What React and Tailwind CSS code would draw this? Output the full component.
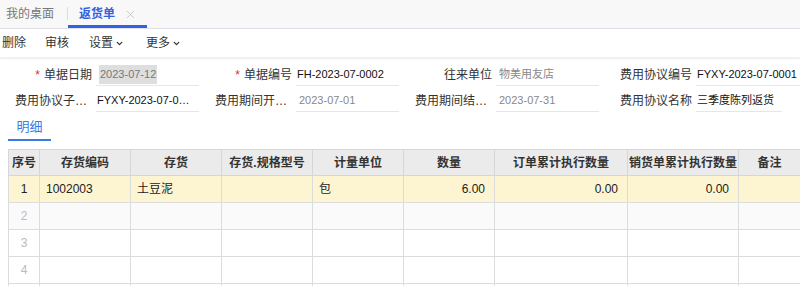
import { ChevronDown, X } from "lucide-react";

const font = { fontFamily: '"Liberation Sans", "Noto Sans CJK SC", sans-serif' };

const fields = [
  [
    { label: "单据日期", value: "2023-07-12", required: true, muted: true, selected: true },
    { label: "单据编号", value: "FH-2023-07-0002", required: true },
    { label: "往来单位", value: "物美用友店", muted: true },
    { label: "费用协议编号", value: "FYXY-2023-07-0001", wide: true },
  ],
  [
    { label: "费用协议子期间", value: "FYXY-2023-07-0001", clip: true },
    { label: "费用期间开始日期", value: "2023-07-01", muted: true },
    { label: "费用期间结束日期", value: "2023-07-31", muted: true },
    { label: "费用协议名称", value: "三季度陈列返货", short: true },
  ],
];

const columns = [
  { title: "序号", width: 31 },
  { title: "存货编码", width: 91 },
  { title: "存货", width: 91 },
  { title: "存货.规格型号", width: 91 },
  { title: "计量单位", width: 91 },
  { title: "数量", width: 91 },
  { title: "订单累计执行数量", width: 133 },
  { title: "销货单累计执行数量", width: 111 },
  { title: "备注", width: 62 },
];

const rows = [
  ["1", "1002003", "土豆泥", "", "包", "6.00", "0.00", "0.00", ""],
  ["2", "", "", "", "", "", "", "", ""],
  ["3", "", "", "", "", "", "", "", ""],
  ["4", "", "", "", "", "", "", "", ""],
];

function Field({ f }) {
  return (
    <div className="flex h-[26px] w-[200px] items-center">
      <div className="ml-[15px] w-[77px] truncate text-right text-[12px] text-[#333]">
        {f.required && <span className="mr-1 text-[#e23]">*</span>}
        {f.label}
      </div>
      <div
        className={`ml-[4px] flex h-[22px] items-center border-b border-[#e6e6e6] ${
          f.short ? "w-[86px]" : f.wide ? "w-[104px]" : "w-[103px]"
        } ${f.muted ? "pl-[3px] text-[#888]" : "pl-[1px] text-[#111]"}`}
      >
        <span
          className={`whitespace-nowrap text-[11px] ${f.clip ? "w-[96px] truncate" : ""} ${
            f.selected ? "bg-[#dedede] px-[1px] py-[1px] text-[#777]" : ""
          }`}
        >
          {f.value}
        </span>
      </div>
    </div>
  );
}

export default function App() {
  return (
    <div className="h-[286px] w-[800px] overflow-hidden bg-white" style={font}>
      <div className="flex h-[29px] items-end border-b border-[#e1dfe8] bg-[#f8f8f8]">
        <div className="flex h-[28px] items-center pl-[6px] pr-[13px] text-[12px] text-[#777]">
          我的桌面
        </div>
        <div className="mb-[8px] h-[13px] w-px bg-[#ddd]" />
        <div className="flex h-[28px] w-[79px] items-center border-b-[3px] border-[#3461e0] pl-[11px] pt-[3px]">
          <span className="text-[12px] font-bold text-[#3461e0]">返货单</span>
          <X size={13} strokeWidth={1.3} className="ml-[9px] text-[#bbb]" />
        </div>
      </div>
      <div className="flex h-[28px] items-center text-[12px] text-[#333] shadow-[0_2px_2px_rgba(0,0,0,0.07)]">
        <span className="ml-[2px]">删除</span>
        <span className="ml-[19px]">审核</span>
        <span className="ml-[20px] flex items-center">
          设置
          <ChevronDown size={9} strokeWidth={3.5} className="ml-[2px]" />
        </span>
        <span className="ml-[22px] flex items-center">
          更多
          <ChevronDown size={9} strokeWidth={3.5} className="ml-[2px]" />
        </span>
      </div>
      <div className="pt-[5px]">
        {fields.map((row, i) => (
          <div key={i} className="flex">
            {row.map((f) => (
              <Field key={f.label} f={f} />
            ))}
          </div>
        ))}
      </div>
      <div className="ml-[8px] flex h-[27px]">
        <div className="flex w-[43px] items-center justify-center border-b-2 border-[#3a7ce6] pt-[1px] text-[13px] text-[#3a7ce6]">
          明细
        </div>
      </div>
      <div className="ml-[8px] mt-[8px]">
        <table className="w-[792px] table-fixed border-collapse text-[12px] text-[#222]">
          <colgroup>
            {columns.map((c) => (
              <col key={c.title} style={{ width: c.width }} />
            ))}
          </colgroup>
          <thead>
            <tr className="h-[26px] bg-[#ebebeb]">
              {columns.map((c) => (
                <th
                  key={c.title}
                  className="truncate border border-[#d6d6d6] px-0 text-center font-bold text-[#333]"
                >
                  {c.title}
                </th>
              ))}
            </tr>
          </thead>
          <tbody>
            {rows.map((r, i) => (
              <tr
                key={i}
                className={`h-[27px] ${
                  i === 0 ? "bg-[#fdf5d1]" : i === 1 ? "bg-[#fafafa]" : "bg-white"
                }`}
              >
                {r.map((v, j) => (
                  <td
                    key={j}
                    className={`border border-[#dcdcdc] ${
                      j === 0
                        ? `text-center ${i === 0 ? "text-[#222]" : "text-[#bbb]"}`
                        : j >= 5
                        ? "pr-[9px] text-right"
                        : "pl-[6px] text-left"
                    }`}
                  >
                    {v}
                  </td>
                ))}
              </tr>
            ))}
            <tr className="h-[27px]">
              {columns.map((c) => (
                <td key={c.title} className="border border-[#dcdcdc]" />
              ))}
            </tr>
          </tbody>
        </table>
      </div>
    </div>
  );
}
